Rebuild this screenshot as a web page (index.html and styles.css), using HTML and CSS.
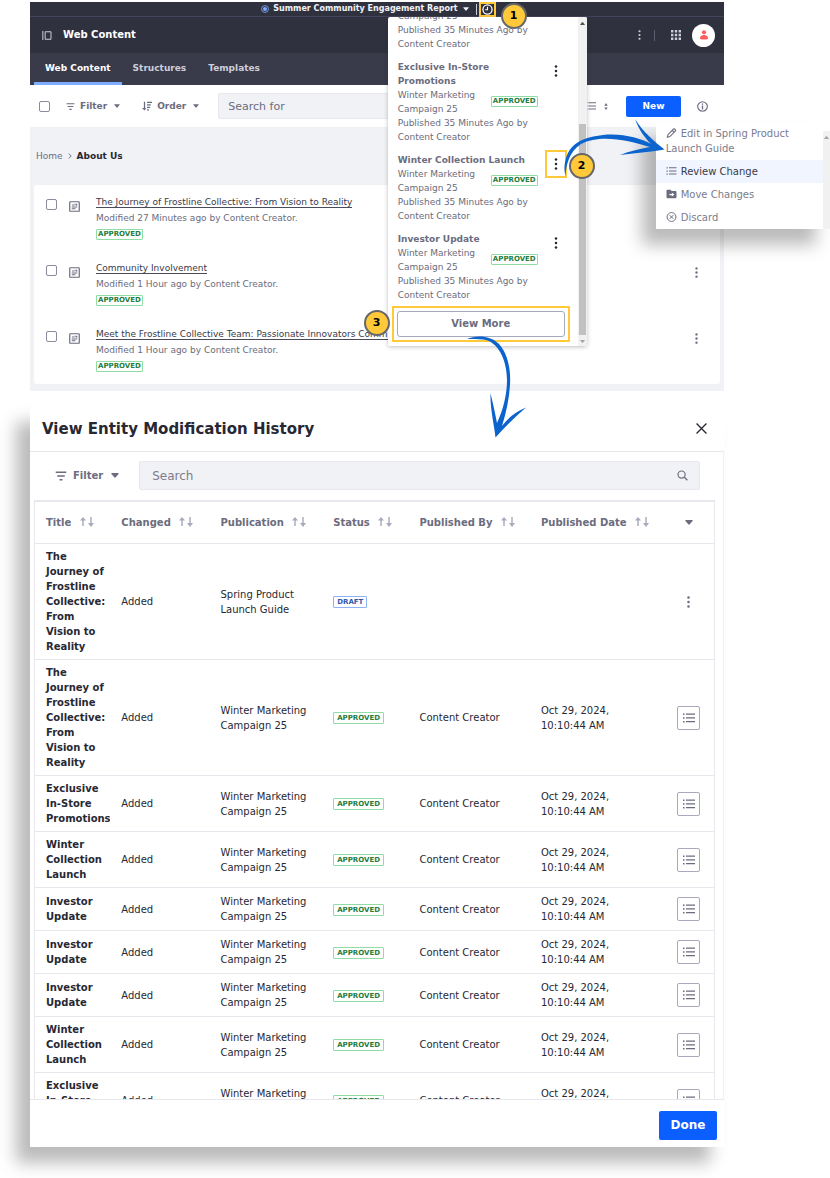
FILE: index.html
```html
<!DOCTYPE html>
<html lang="en">
<head>
<meta charset="utf-8">
<title>Web Content</title>
<link rel="stylesheet" href="styles.css">
</head>
<body>
<svg class="sprite" aria-hidden="true">
  <symbol id="filter" viewBox="0 0 16 16"><path d="M1 2h14v2H1zM3 7h10v2H3zM6 12h4v2H6z"/></symbol>
  <symbol id="order" viewBox="0 0 16 16"><path d="M3 1h2v10h2l-3 4-4-4h3zM8 1h8v2H8zM8 5h6v2H8zM8 9h5v2H8zM8 13h3v2H8z"/></symbol>
  <symbol id="caret" viewBox="0 0 10 6"><path d="M1 0h8q1 0 .5 1L5.6 5.5q-.6.6-1.200 0L.5 1Q0 0 1 0z"/></symbol>
  <symbol id="dots" viewBox="0 0 4 16"><circle cx="2" cy="2" r="1.700"/><circle cx="2" cy="8" r="1.700"/><circle cx="2" cy="14" r="1.700"/></symbol>
  <symbol id="list" viewBox="0 0 16 16"><path d="M0 2h2v2H0zM4 2h12v1.700H4zM0 7h2v2H0zM4 7h12v1.700H4zM0 12h2v2H0zM4 12h12v1.700H4z"/></symbol>
  <symbol id="sort" viewBox="0 0 14 10"><path d="M3 0 6 3.500H3.700V9H2.300V3.500H0zM10.300 0h1.400v6H14L11 10 8 6h2.300z"/></symbol>
  <symbol id="doc" viewBox="0 0 12 12"><path fill="none" stroke="currentColor" stroke-width="1.300" d="M1.500.8h9q.7 0 .7.700v9q0 .7-.7.700h-9q-.7 0-.7-.700v-9q0-.7.700-.700z"/><path d="M3 6h6v1H3zM3 8h4v1H3zM3 4.800 4.500 3l1 1.800zM6 3h1v2H6zM7.500 3H9v2H7.500z"/></symbol>
</svg>

<div class="page">
  <section class="app">
    <div class="pubbar">
      <svg class="i8 blue" viewBox="0 0 10 10"><circle cx="5" cy="5" r="4.300" fill="none" stroke="currentColor"/><circle cx="5" cy="5" r="2.500"/></svg>
      <button class="pubname" type="button">Summer Community Engagement Report <svg class="caret-s"><use href="#caret"/></svg></button>
      <span class="rule"></span>
      <div class="history">
        <button class="clock mark" type="button" aria-label="Timeline"><svg viewBox="0 0 12 12"><circle cx="6" cy="6" r="5" fill="none" stroke="currentColor" stroke-width="1.400"/><path fill="none" stroke="currentColor" stroke-width="1.200" d="M6 3v3.300H3.500"/></svg></button>

        <div class="timeline">
          <div class="timeline-view">
            <div class="timeline-list">
              <article class="change">
                <div><div class="status"><span>Winter Marketing Campaign 25</span></div><p>Published 35 Minutes Ago by Content Creator</p></div>
              </article>
              <article class="change">
                <div><h3>Exclusive In-Store Promotions</h3><div class="status"><span>Winter Marketing Campaign 25</span><b class="label">APPROVED</b></div><p>Published 35 Minutes Ago by Content Creator</p></div>
                <button class="more" type="button" aria-label="Actions"><svg><use href="#dots"/></svg></button>
              </article>
              <article class="change">
                <div><h3>Winter Collection Launch</h3><div class="status"><span>Winter Marketing Campaign 25</span><b class="label">APPROVED</b></div><p>Published 35 Minutes Ago by Content Creator</p></div>
                <button class="more mark" type="button" aria-label="Actions"><svg><use href="#dots"/></svg></button>
              </article>
              <article class="change">
                <div><h3>Investor Update</h3><div class="status"><span>Winter Marketing Campaign 25</span><b class="label">APPROVED</b></div><p>Published 35 Minutes Ago by Content Creator</p></div>
                <button class="more" type="button" aria-label="Actions"><svg><use href="#dots"/></svg></button>
              </article>
            </div>
            <div class="viewmore mark"><button type="button">View More</button></div>
          </div>
          <div class="scrollbar"><svg class="up"><use href="#caret"/></svg><span class="thumb"></span><svg class="down"><use href="#caret"/></svg></div>
        </div>

        <div class="menu-wrap">
          <div class="menu">
            <button type="button"><svg viewBox="0 0 12 12"><path fill="none" stroke="currentColor" stroke-width="1.300" d="M1 11l.7-3L8.500 1.200q.6-.5 1.200 0l1.100 1.100q.5.600 0 1.200L4 10.300zM7 3l2 2"/></svg>Edit in Spring Product Launch Guide</button>
            <button class="active" type="button"><svg><use href="#list"/></svg>Review Change</button>
            <button type="button"><svg viewBox="0 0 12 12"><path fill-rule="evenodd" d="M1 1h4l1 1.500h5q1 0 1 1V10q0 1-1 1H1q-1 0-1-1V2q0-1 1-1zM3.500 6v1.500h3V9L9.500 6.700 6.500 4.500V6z"/></svg>Move Changes</button>
            <button type="button"><svg viewBox="0 0 12 12"><path fill="none" stroke="currentColor" stroke-width="1.200" d="M6 .7a5.300 5.300 0 1 0 .01 0zM3.800 3.800l4.400 4.400M8.200 3.800 3.800 8.200"/></svg>Discard</button>
          </div>
          <div class="menu-track"><svg><use href="#caret"/></svg></div>
        </div>

        <svg class="arrows" viewBox="388 17 442 430" aria-hidden="true">
          <path d="M664.500 149.500C655 142 643 132 635 119C639 130 645 138 651 144C640 138 622 133 603 135C585 137 571 142 566 158C564 165 564 171 565.500 176C566 165 569 152 581 144C600 134 628 140 650 147C640 149 630 151 620 155C634 153 650 152 664.500 149.500Z"/>
          <path d="M467 339C476 335 490 335 499 344C508 354 511 370 510 385C509 400 506 413 502 426C508 418 515 412 526 407.500C515 417 505 427 495.500 437.500C494 424 490 408 490.500 393.500C493 403 495 413 497 423C503 410 507 395 507 380C507 360 498 341 483 339.500C477 338.500 472 339 467 339Z"/>
        </svg>
        <span class="step one">1</span>
        <span class="step two">2</span>
        <span class="step three">3</span>
      </div>
    </div>

    <header class="header">
      <svg class="panel" viewBox="0 0 12 12"><path fill="none" stroke="currentColor" stroke-width="1.200" d="M1 .5v11M3.800 1.500h7v9h-7z"/></svg>
      <h1>Web Content</h1>
      <svg class="dots"><use href="#dots"/></svg>
      <span class="rule"></span>
      <svg class="apps" viewBox="0 0 10 10"><path d="M0 0h2.400v2.400H0zM3.800 0h2.400v2.400H3.800zM7.600 0H10v2.400H7.600zM0 3.800h2.400v2.400H0zM3.800 3.800h2.400v2.400H3.800zM7.600 3.800H10v2.400H7.600zM0 7.600h2.400V10H0zM3.800 7.600h2.400V10H3.800zM7.600 7.600H10V10H7.600z"/></svg>
      <span class="avatar"><svg viewBox="0 0 10 10"><circle cx="5" cy="2.300" r="2.100"/><path d="M1 9V7.500Q1.500 5 5 5t4 2.500V9q-4 1.200-8 0z"/></svg></span>
    </header>
    <nav class="tabs"><a class="active" href="#">Web Content</a><a href="#">Structures</a><a href="#">Templates</a></nav>

    <div class="toolbar">
      <input type="checkbox" aria-label="Select all">
      <button type="button"><svg class="i9"><use href="#filter"/></svg>Filter<svg class="caret-s"><use href="#caret"/></svg></button>
      <button type="button"><svg class="i10"><use href="#order"/></svg>Order<svg class="caret-s"><use href="#caret"/></svg></button>
      <input class="search" type="text" placeholder="Search for" aria-label="Search for">
      <button class="view" type="button" aria-label="View"><svg class="i10"><use href="#list"/></svg><svg class="updown" viewBox="0 0 4 8"><path d="M2 0l2 3H0zM2 8 0 5h4z"/></svg></button>
      <button class="primary" type="button">New</button>
      <svg class="info" viewBox="0 0 12 12"><path fill="none" stroke="currentColor" stroke-width="1.200" d="M6 .8a5.200 5.200 0 1 0 .01 0z"/><path d="M5.300 2.800h1.400v1.300H5.300zM5.300 5h1.400v4.200H5.300z"/></svg>
    </div>

    <div class="content">
      <nav class="crumbs"><a href="#">Home</a><svg viewBox="0 0 6 10"><path fill="none" stroke="currentColor" stroke-width="1.600" d="M1 1l4 4-4 4"/></svg><b>About Us</b></nav>
      <ul class="entries">
        <li><input type="checkbox" aria-label="Select The Journey of Frostline Collective"><svg class="doc"><use href="#doc"/></svg><div class="entry"><a href="#">The Journey of Frostline Collective: From Vision to Reality</a><p>Modified 27 Minutes ago by Content Creator.</p><b class="label">APPROVED</b></div><svg class="dots"><use href="#dots"/></svg></li>
        <li><input type="checkbox" aria-label="Select Community Involvement"><svg class="doc"><use href="#doc"/></svg><div class="entry"><a href="#">Community Involvement</a><p>Modified 1 Hour ago by Content Creator.</p><b class="label">APPROVED</b></div><svg class="dots"><use href="#dots"/></svg></li>
        <li><input type="checkbox" aria-label="Select Meet the Frostline Collective Team"><svg class="doc"><use href="#doc"/></svg><div class="entry"><a href="#">Meet the Frostline Collective Team: Passionate Innovators Committed</a><p>Modified 1 Hour ago by Content Creator.</p><b class="label">APPROVED</b></div><svg class="dots"><use href="#dots"/></svg></li>
      </ul>
    </div>
  </section>

  <section class="modal">
    <header class="modal-head"><h2>View Entity Modification History</h2><button type="button" aria-label="Close"><svg viewBox="0 0 10 10"><path fill="none" stroke="currentColor" stroke-width="1.200" d="M.5.500l9 9M9.500.500l-9 9"/></svg></button></header>
    <div class="modal-body">
      <div class="modal-tools">
        <button type="button"><svg class="i12"><use href="#filter"/></svg>Filter<svg class="caret-m"><use href="#caret"/></svg></button>
        <div class="searchbox"><input type="text" placeholder="Search" aria-label="Search"><svg viewBox="0 0 12 12"><circle cx="5" cy="5" r="3.900" fill="none" stroke="currentColor" stroke-width="1.300"/><path stroke="currentColor" stroke-width="1.500" d="M8 8l3.300 3.300"/></svg></div>
      </div>
      <table>
        <colgroup><col class="c-title"><col class="c-changed"><col class="c-pub"><col class="c-status"><col class="c-by"><col class="c-date"><col></colgroup>
        <thead><tr>
          <th>Title <svg><use href="#sort"/></svg></th><th>Changed <svg><use href="#sort"/></svg></th><th>Publication <svg><use href="#sort"/></svg></th><th>Status <svg><use href="#sort"/></svg></th><th>Published By <svg><use href="#sort"/></svg></th><th>Published Date <svg><use href="#sort"/></svg></th><th class="act"><button class="plain" type="button" aria-label="Columns"><svg class="caret-m"><use href="#caret"/></svg></button></th>
        </tr></thead>
        <tbody>
          <tr><th>The Journey of Frostline Collective: From Vision to Reality</th><td>Added</td><td>Spring Product Launch Guide</td><td><b class="label draft">DRAFT</b></td><td></td><td></td><td class="act"><button class="plain" type="button" aria-label="Actions"><svg class="dots"><use href="#dots"/></svg></button></td></tr>
          <tr><th>The Journey of Frostline Collective: From Vision to Reality</th><td>Added</td><td>Winter Marketing Campaign 25</td><td><b class="label">APPROVED</b></td><td>Content Creator</td><td>Oct 29, 2024, 10:10:44 AM</td><td class="act"><button class="review" type="button" aria-label="Review"><svg><use href="#list"/></svg></button></td></tr>
          <tr><th>Exclusive In-Store Promotions</th><td>Added</td><td>Winter Marketing Campaign 25</td><td><b class="label">APPROVED</b></td><td>Content Creator</td><td>Oct 29, 2024, 10:10:44 AM</td><td class="act"><button class="review" type="button" aria-label="Review"><svg><use href="#list"/></svg></button></td></tr>
          <tr><th>Winter Collection Launch</th><td>Added</td><td>Winter Marketing Campaign 25</td><td><b class="label">APPROVED</b></td><td>Content Creator</td><td>Oct 29, 2024, 10:10:44 AM</td><td class="act"><button class="review" type="button" aria-label="Review"><svg><use href="#list"/></svg></button></td></tr>
          <tr><th>Investor Update</th><td>Added</td><td>Winter Marketing Campaign 25</td><td><b class="label">APPROVED</b></td><td>Content Creator</td><td>Oct 29, 2024, 10:10:44 AM</td><td class="act"><button class="review" type="button" aria-label="Review"><svg><use href="#list"/></svg></button></td></tr>
          <tr><th>Investor Update</th><td>Added</td><td>Winter Marketing Campaign 25</td><td><b class="label">APPROVED</b></td><td>Content Creator</td><td>Oct 29, 2024, 10:10:44 AM</td><td class="act"><button class="review" type="button" aria-label="Review"><svg><use href="#list"/></svg></button></td></tr>
          <tr><th>Investor Update</th><td>Added</td><td>Winter Marketing Campaign 25</td><td><b class="label">APPROVED</b></td><td>Content Creator</td><td>Oct 29, 2024, 10:10:44 AM</td><td class="act"><button class="review" type="button" aria-label="Review"><svg><use href="#list"/></svg></button></td></tr>
          <tr><th>Winter Collection Launch</th><td>Added</td><td>Winter Marketing Campaign 25</td><td><b class="label">APPROVED</b></td><td>Content Creator</td><td>Oct 29, 2024, 10:10:44 AM</td><td class="act"><button class="review" type="button" aria-label="Review"><svg><use href="#list"/></svg></button></td></tr>
          <tr><th>Exclusive In-Store Promotions</th><td>Added</td><td>Winter Marketing Campaign 25</td><td><b class="label">APPROVED</b></td><td>Content Creator</td><td>Oct 29, 2024, 10:10:44 AM</td><td class="act"><button class="review" type="button" aria-label="Review"><svg><use href="#list"/></svg></button></td></tr>
        </tbody>
      </table>
    </div>
    <footer class="modal-foot"><button class="primary" type="button">Done</button></footer>
  </section>
</div>
</body>
</html>
```
FILE: styles.css
```css
* { box-sizing: border-box; }
body { margin: 0; background: #fff; color: #272833; font: 9px/14px "DejaVu Sans", Verdana, sans-serif; }
h1, h2, h3, p, ul { margin: 0; padding: 0; font-size: inherit; }
ul { list-style: none; }
a { color: inherit; text-decoration: none; }
button { margin: 0; padding: 0; border: 0; background: none; color: inherit; font: inherit; }
svg { display: block; flex: none; fill: currentColor; }
.sprite { position: absolute; width: 0; height: 0; }
.page { display: flex; flex-direction: column; min-width: 700px; height: 100vh; padding: 2px 106px 31px 30px; overflow: hidden; }

.i8 { width: 8px; height: 8px; }
.i9 { width: 9px; height: 9px; }
.i10 { width: 10px; height: 10px; }
.i12 { width: 12px; height: 12px; }
.caret-s { width: 6px; height: 4px; }
.caret-m { width: 8px; height: 5px; }
.dots { width: 3px; height: 12px; }
.blue { color: #80acff; }

input[type="checkbox"] { appearance: none; flex: none; width: 11px; height: 11px; margin: 0; border: 1px solid #8a8b9c; border-radius: 2px; background: #fff; }
.label { display: inline-block; padding: 0 1px; border: 1px solid #8fdca4; border-radius: 1px; color: #287d3c; font-size: 7px; line-height: 9px; font-weight: bold; }
.primary { border-radius: 2px; background: #0b5fff; color: #fff; font-weight: bold; }
.mark { border: 2px solid #ffc93a; }

/* Publication bar */
.app { position: relative; z-index: 1; flex: none; }
.pubbar { display: flex; align-items: center; justify-content: center; height: 15px; padding-left: 3px; border-bottom: 1px solid #43445a; background: #30313f; color: #f1f2f5; }
.pubname { display: flex; align-items: center; gap: 5px; padding: 0 7px 0 4px; font-size: 8px; font-weight: bold; white-space: nowrap; }
.pubbar .rule { width: 1px; height: 11px; margin-right: 2px; background: #cdced9; }
.history { position: relative; }
.clock { display: flex; align-items: center; justify-content: center; width: 17px; height: 15px; color: #fff; }
.clock svg { width: 11px; height: 11px; }

.timeline { position: absolute; z-index: 2; top: 15px; left: -91px; display: flex; width: 199px; height: 329px; border-radius: 2px; background: #fff; box-shadow: 0 1px 4px rgba(39, 40, 51, .3); color: #6b6c7e; overflow: hidden; }
.timeline-view { display: flex; flex: 1; flex-direction: column; min-width: 0; padding-bottom: 4px; }
.timeline-list { display: flex; flex: 1; flex-direction: column; justify-content: flex-end; gap: 9px; min-height: 0; padding: 0 10px 4px; overflow: hidden; }
.change { display: flex; flex: none; justify-content: space-between; }
.change > div { width: 140px; }
.change h3 { font-weight: bold; }
.status { display: flex; align-items: center; justify-content: space-between; }
.status span { width: 84px; }
.more { display: flex; align-items: center; justify-content: center; align-self: flex-start; width: 22px; height: 28px; margin: -3px 1px 0 0; color: #272833; }
.more svg { width: 4px; height: 12px; }
.viewmore { flex: none; margin: 0 8px 0 4px; padding: 3px; }
.viewmore button { display: block; width: 100%; height: 26px; border: 1px solid #a7a9bc; border-radius: 3px; font-size: 10px; font-weight: bold; }
.scrollbar { display: flex; flex-direction: column; align-items: center; width: 9px; background: #f1f1f1; color: #505050; }
.scrollbar svg { width: 5px; height: 3px; }
.scrollbar .up { margin-top: 5px; transform: rotate(180deg); }
.scrollbar .thumb { width: 7px; flex: 1; margin: 99px 0 5px; background: #c1c1c1; }
.scrollbar .down { margin-bottom: 3px; color: #a3a3a3; }

.menu-wrap { position: absolute; z-index: 3; top: 120px; left: 177px; display: flex; width: 174px; box-shadow: -14px 16px 16px rgba(0, 0, 0, .27); }
.menu { flex: 1; background: #fff; color: #7b7c8d; font-size: 10px; line-height: 15px; }
.menu button { display: block; width: 100%; padding: 4px 10px; text-align: left; }
.menu svg { display: inline-block; width: 11px; height: 10px; margin-right: 4px; vertical-align: -1px; color: #6b6c7e; }
.menu .active { background: #f0f5ff; color: #393a4a; }
.menu-track { width: 7px; padding: 5px 1px 0; border-top: 9px solid #fff; background: #f1f1f1; color: #a3a3a3; }
.menu-track svg { width: 5px; height: 3px; transform: rotate(180deg); }
.arrows { position: absolute; z-index: 4; top: 15px; left: -91px; width: 442px; height: 430px; color: #0b63ce; pointer-events: none; }
.step { position: absolute; z-index: 5; width: 26px; height: 26px; border: 2px solid #66676b; border-radius: 50%; background: #ffc93a; color: #000; font-size: 11px; line-height: 22px; font-weight: bold; text-align: center; }
.one { top: 1px; left: 22px; }
.two { top: 151px; left: 90px; }
.three { top: 308px; left: -115px; }

/* Application header */
.header { display: flex; align-items: center; height: 36px; padding: 0 9px 0 12px; background: #30313f; color: #cdced9; }
.header h1 { flex: 1; margin-left: 11px; color: #fff; font-size: 10px; font-weight: bold; }
.header .panel { width: 10px; height: 11px; }
.header .dots { height: 10px; }
.header .rule { width: 1px; height: 11px; margin: 0 16px 0 13px; background: #5c5d70; }
.header .apps { width: 10px; height: 10px; margin-right: 11px; }
.avatar { display: flex; align-items: center; justify-content: center; width: 23px; height: 23px; border-radius: 50%; background: #fff; color: #ff5f5f; }
.avatar svg { width: 10px; height: 10px; }
.tabs { display: flex; padding-left: 4px; background: #393a4a; color: #cdced9; font-weight: bold; }
.tabs a { padding: 9px 11px 7px; border-bottom: 3px solid transparent; line-height: 13px; }
.tabs .active { border-color: #80acff; color: #fff; }

.toolbar { display: flex; align-items: center; height: 42px; padding: 0 16px 0 9px; background: #fff; color: #6b6c7e; }
.toolbar button { display: flex; align-items: center; gap: 5px; margin-left: 16px; font-weight: bold; }
.toolbar button + button { margin-left: 22px; }
.toolbar button .caret-s { margin-left: 2px; }
.search { flex: 1; min-width: 0; height: 26px; margin: 0 0 0 19px; padding: 0 9px; border: 1px solid #e7e7ed; border-radius: 2px; background: #f1f2f5; font: 11px/16px "DejaVu Sans", Verdana, sans-serif; }
.search::placeholder { color: #6b6c7e; }
.toolbar .view { gap: 8px; margin-left: 17px; }
.updown { width: 4px; height: 7px; }
.toolbar .primary { justify-content: center; width: 55px; height: 21px; margin-left: 18px; }
.info { width: 11px; height: 11px; margin-left: 16px; }

.content { padding: 0 4px 7px; background: #f1f2f5; }
.crumbs { display: flex; align-items: center; gap: 5px; height: 58px; padding-left: 2px; color: #6b6c7e; }
.crumbs svg { width: 4px; height: 6px; }
.crumbs b { color: #272833; }
.entries { border-radius: 3px; background: #fff; }
.entries li { display: flex; align-items: flex-start; height: 66px; padding: 9px 22px 0 12px; color: #6b6c7e; }
.entries li:last-child { height: 67px; }
.entries input { margin-top: 5px; }
.doc { width: 11px; height: 11px; margin: 7px 16px 0 12px; }
.entry { flex: 1; min-width: 0; line-height: 16px; white-space: nowrap; }
.entry a { display: inline-block; height: 14px; border-bottom: 1px solid #4a4b5b; color: #393a4a; }
.entry .label { display: block; width: max-content; margin-top: 3px; }
.entries .dots { height: 11px; margin-top: 7px; }

/* History dialog */
.modal { display: flex; flex: 1; flex-direction: column; min-height: 0; margin-top: 15px; background: #fff; box-shadow: -14px 16px 16px rgba(0, 0, 0, .27); font-size: 10px; line-height: 15px; }
.modal-head { display: flex; align-items: center; justify-content: space-between; height: 46px; flex: none; padding: 0 17px 0 12px; border-bottom: 1px solid #e7e7ed; }
.modal-head h2 { font-size: 15px; line-height: 20px; font-weight: bold; }
.modal-head svg { width: 11px; height: 11px; }
.modal-body { flex: 1; min-height: 0; padding: 9px 8px 0 4px; border-right: 1px solid #f1f2f5; overflow: hidden; }
.modal-tools { display: flex; align-items: center; padding: 0 15px 10px 21px; color: #6b6c7e; }
.modal-tools button { display: flex; align-items: center; gap: 6px; margin-right: 20px; font-weight: bold; }
.modal-tools .caret-m { margin-left: 2px; }
.searchbox { display: flex; flex: 1; align-items: center; height: 29px; padding-right: 11px; border: 1px solid #e7e7ed; border-radius: 2px; background: #f1f2f5; }
.searchbox input { flex: 1; min-width: 0; padding: 0 12px; border: 0; background: none; font: 12px/16px "DejaVu Sans", Verdana, sans-serif; }
.searchbox input::placeholder { color: #7b7c8d; }
.searchbox svg { width: 11px; height: 11px; }
table { width: 100%; table-layout: fixed; border-collapse: separate; border-spacing: 0; border: 1px solid #e7e7ed; border-top-width: 2px; }
.c-title { width: 11.1%; }
.c-changed { width: 14.6%; }
.c-pub { width: 16.6%; }
.c-status { width: 12.7%; }
.c-by { width: 17.9%; }
.c-date { width: 20%; }
th, td { padding: 6px 14px 6px 11px; border-bottom: 1px solid #e7e7ed; text-align: left; vertical-align: middle; }
thead th { height: 42px; padding-right: 0; color: #6b6c7e; white-space: nowrap; }
thead th svg { display: inline-block; width: 14px; height: 10px; margin-left: 5px; vertical-align: -1px; color: #a7a9bc; }
tbody th { padding: 5px 0 5px 11px; overflow: hidden; }
td .label { padding: 0 3px; vertical-align: middle; line-height: 10px; }
.draft { border-color: #8db3f5; color: #2e5aac; }
th.act, td.act { padding: 0 14px 0 0; }
.act button { display: flex; align-items: center; justify-content: center; width: 23px; height: 24px; margin-left: auto; color: #6b6c7e; }
thead .act .caret-m { width: 8px; height: 5px; margin: 0; color: #6b6c7e; }
.review { border: 1px solid #a7a9bc; border-radius: 2px; }
.act .review svg { width: 12px; height: 12px; }
.modal-foot { display: flex; flex: none; justify-content: flex-end; padding: 11px 7px 7px; border-top: 1px solid #e7e7ed; }
.modal-foot .primary { width: 58px; height: 29px; font-size: 12px; }
```
